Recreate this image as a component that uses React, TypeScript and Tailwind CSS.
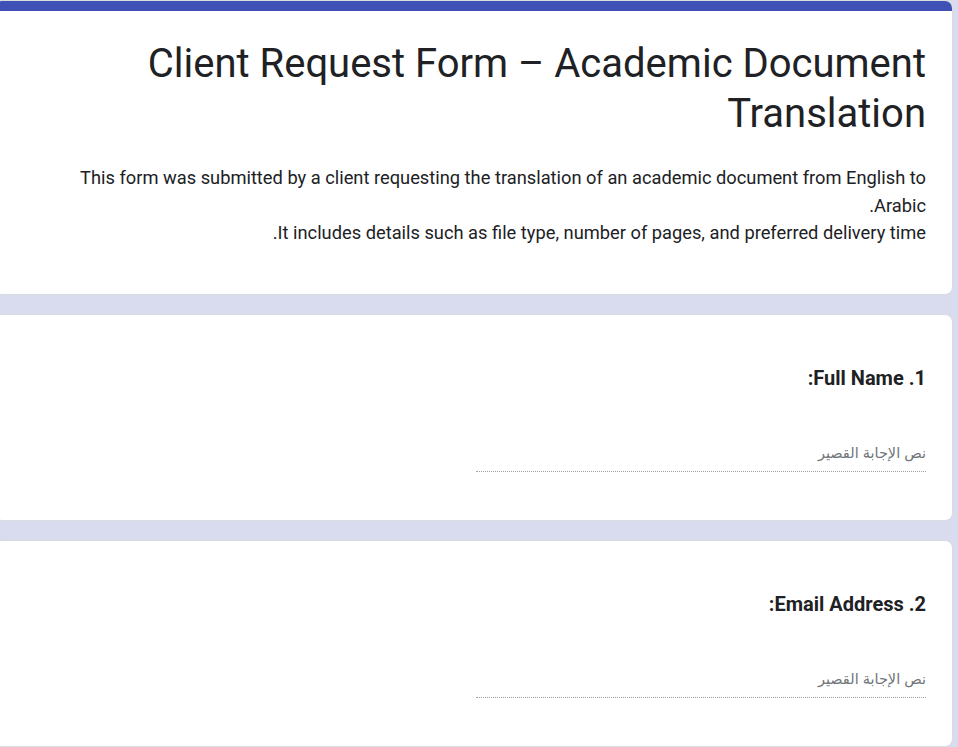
import React from "react";

const questions = [
  { id: "name", label: "1. Full Name:" },
  { id: "email", label: "2. Email Address:" },
];

function QuestionCard({ label }: { label: string }) {
  return (
    <div className="-ml-[6px] mr-[5px] rounded-lg border border-[#dadce0] bg-white pt-[51px] pr-[26px] pb-[48px] pl-[30px]">
      <h2 className="text-[20px] leading-[24px] font-bold text-[#202124]">
        {label}
      </h2>
      <div className="mt-[51px] w-[450px] border-b border-dotted border-[#9aa0a6] pb-[6px]">
        <span className="text-[14.5px] leading-[20px] text-[#70757a] [font-family:Arial,'DejaVu_Sans',sans-serif]">
          نص الإجابة القصير
        </span>
      </div>
    </div>
  );
}

export default function App() {
  return (
    <div
      dir="rtl"
      className="flex min-h-screen flex-col gap-[19px] overflow-hidden bg-[#d9dbef] [font-family:Roboto,'Liberation_Sans',sans-serif]"
    >
      <div className="-ml-[6px] mr-[5px] overflow-hidden rounded-lg border border-[#dadce0] bg-white">
        <div className="h-[10px] bg-[#3f51b5]" />
        <div className="pt-[28px] pr-[26px] pb-[47px] pl-[30px]">
          <h1 className="text-[40px] leading-[50px] text-[#202124]">
            Client Request Form – Academic Document Translation
          </h1>
          <div className="mt-[25px] text-[18.3px] leading-[27.5px] text-[#202124]">
            <p>
              This form was submitted by a client requesting the translation of
              an academic document from English to
              <br />
              Arabic.
            </p>
            <p>
              It includes details such as file type, number of pages, and
              preferred delivery time.
            </p>
          </div>
        </div>
      </div>
      {questions.map((q) => (
        <QuestionCard key={q.id} label={q.label} />
      ))}
    </div>
  );
}
